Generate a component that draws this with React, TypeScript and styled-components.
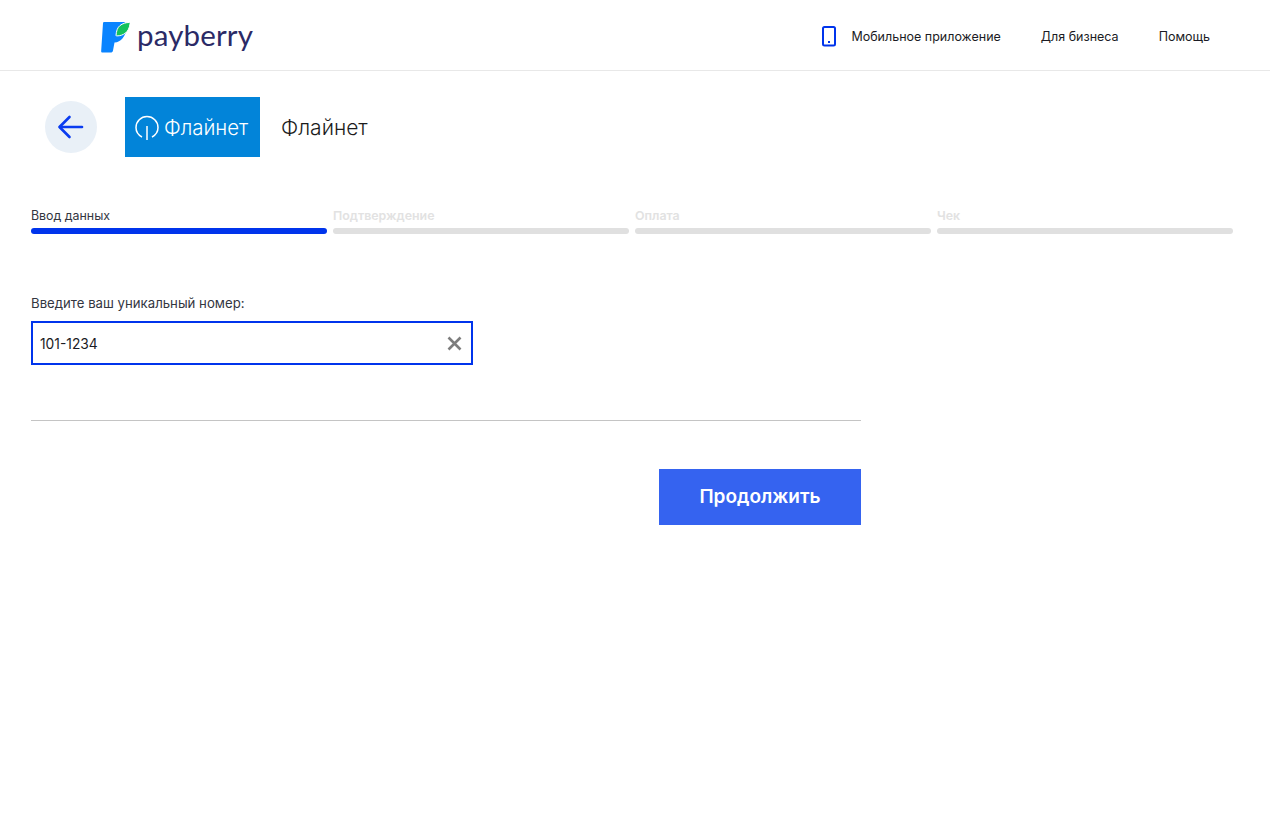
import React from "react";
import styled, { createGlobalStyle } from "styled-components";

const Global = createGlobalStyle`
  html, body { margin: 0; padding: 0; background: #fff; }
  body { font-family: Inter, "Noto Sans", sans-serif; color: #1a1a22; }
`;

const Header = styled.header`
  height: 70px;
  border-bottom: 1px solid #e8e8e8;
  display: flex;
  align-items: center;
  justify-content: space-between;
  padding: 0 60px 0 101px;
`;
const Logo = styled.div`
  display: flex;
  align-items: center;
  gap: 7px;
  margin-top: 3px;
`;
const LogoText = styled.span`
  font-family: Lato, Inter, sans-serif;
  font-size: 29.5px;
  font-weight: 400;
  letter-spacing: 0.15px;
  color: #2b2a66;
  line-height: 34px;
  position: relative;
  top: -2px;
`;
const Nav = styled.nav`
  display: flex;
  align-items: center;
  gap: 40px;
  margin-top: 3px;
`;
const NavItem = styled.a`
  display: flex;
  align-items: center;
  gap: 14px;
  font-size: 12.5px;
  font-weight: 400;
  color: #1b1b24;
`;
const Main = styled.main`
  padding: 26px 37px 0 31px;
`;
const TopRow = styled.div`
  display: flex;
  align-items: center;
  padding-left: 14px;
  height: 60px;
`;
const BackButton = styled.button`
  width: 52px;
  height: 52px;
  border: 0;
  padding: 0;
  border-radius: 50%;
  background: #e9f0f7;
  display: flex;
  align-items: center;
  justify-content: center;
  margin-right: 28px;
`;
const Banner = styled.div`
  width: 135px;
  height: 60px;
  background: #0284d9;
  color: #fff;
  display: flex;
  align-items: center;
  padding-left: 10px;
  gap: 5px;
  box-sizing: border-box;
  font-size: 20.4px;
  font-weight: 300;
`;
const Title = styled.h1`
  margin: 0 0 0 21px;
  font-size: 21px;
  font-weight: 300;
  color: #1c1c1c;
`;
const Steps = styled.div`
  display: grid;
  grid-template-columns: repeat(4, 296px);
  gap: 6px;
  margin-top: 51px;
`;
const Step = styled.div``;
const StepLabel = styled.div<{ $active?: boolean }>`
  font-size: 12.4px;
  line-height: 16px;
  font-weight: ${(p) => (p.$active ? 400 : 600)};
  color: ${(p) => (p.$active ? "#33363f" : "#e2e2e2")};
  margin-bottom: 4px;
`;
const StepBar = styled.div<{ $active?: boolean }>`
  height: 6px;
  border-radius: 3px;
  background: ${(p) => (p.$active ? "#0034ec" : "#e0e0e0")};
`;
const FieldLabel = styled.label`
  display: block;
  margin-top: 61px;
  font-size: 13.2px;
  line-height: 16px;
  color: #33363f;
`;
const InputBox = styled.div`
  width: 442px;
  height: 44px;
  margin-top: 10px;
  box-sizing: border-box;
  border: 2px solid #0034ec;
  display: flex;
  align-items: center;
  justify-content: space-between;
  padding: 0 9px 0 7px;
`;
const InputValue = styled.span`
  font-size: 13.8px;
  line-height: 18px;
  padding-top: 1px;
  color: #1b1b24;
`;
const Form = styled.div`
  width: 830px;
`;
const Divider = styled.hr`
  margin: 55px 0 0;
  border: 0;
  border-top: 1px solid #c4c4c4;
`;
const Actions = styled.div`
  display: flex;
  justify-content: flex-end;
  margin-top: 48px;
`;
const Submit = styled.button`
  width: 202px;
  height: 56px;
  border: 0;
  padding: 0 0 2px;
  background: #3563f0;
  color: #fff;
  font-family: Inter, sans-serif;
  font-size: 19px;
  font-weight: 600;
`;

const steps = ["Ввод данных", "Подтверждение", "Оплата", "Чек"];

export default function App() {
  return (
    <>
      <Global />
      <Header>
        <Logo>
          <svg width="29" height="32" viewBox="0 0 29 32">
            <path d="M3 1H22C25.5 1 26 3.5 25.6 7C24.8 15 20 21.5 13.5 21.5L12 29.5C11.7 31 11 31.5 9.5 31.5H1.5C0.4 31.5 0 31 0.2 29.5L2 2.2C2.1 1.4 2.4 1 3 1Z" fill="#0a84ff" />
            <path d="M15 14.5C15.3 10 16.5 6.5 19 4.5C21.5 2.5 25 1.5 28.2 1.5C29 1.5 29.2 2 29 3C28.4 7 27 10 24.5 12C22 14 19 14.9 16 14.9C15.3 14.9 15 14.8 15 14.5Z" fill="#14c25c" stroke="#fff" strokeWidth="1" />
          </svg>
          <LogoText>payberry</LogoText>
        </Logo>
        <Nav>
          <NavItem>
            <svg width="16" height="21" viewBox="0 0 16 21" fill="none">
              <rect x="2" y="1" width="12" height="18.5" rx="1.5" stroke="#0034ec" strokeWidth="2" />
              <rect x="7" y="15" width="2" height="2" fill="#0034ec" />
            </svg>
            Мобильное приложение
          </NavItem>
          <NavItem>Для бизнеса</NavItem>
          <NavItem>Помощь</NavItem>
        </Nav>
      </Header>
      <Main>
        <TopRow>
          <BackButton aria-label="Назад">
            <svg width="28" height="24" viewBox="0 0 28 24" fill="none" stroke="#0a3cf0" strokeWidth="2.6" strokeLinecap="round" strokeLinejoin="round">
              <path d="M25 12H3" />
              <path d="M12.5 2L2.5 12L12.5 22" />
            </svg>
          </BackButton>
          <Banner>
            <svg width="24" height="30" viewBox="0 0 24 30" fill="none" stroke="#fff" strokeWidth="1.5">
              <path d="M7 25C3.3 23 1 19.5 1 15.5C1 9.5 6 4.5 12 4.5C18 4.5 23 9.5 23 15.5C23 19.5 20.7 23 17 25" />
              <path d="M12 14V28" />
            </svg>
            Флайнет
          </Banner>
          <Title>Флайнет</Title>
        </TopRow>
        <Steps>
          {steps.map((s, i) => (
            <Step key={s}>
              <StepLabel $active={i === 0}>{s}</StepLabel>
              <StepBar $active={i === 0} />
            </Step>
          ))}
        </Steps>
        <Form>
          <FieldLabel>Введите ваш уникальный номер:</FieldLabel>
          <InputBox>
            <InputValue>101-1234</InputValue>
            <svg width="15" height="15" viewBox="0 0 15 15" stroke="#7d7d7d" strokeWidth="2.6">
              <path d="M1.5 1.5L13.5 13.5M13.5 1.5L1.5 13.5" />
            </svg>
          </InputBox>
          <Divider />
          <Actions>
            <Submit>Продолжить</Submit>
          </Actions>
        </Form>
      </Main>
    </>
  );
}
